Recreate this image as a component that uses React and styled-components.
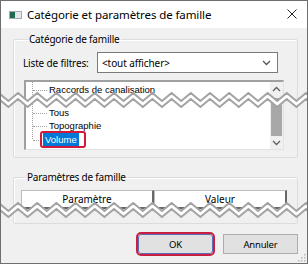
import React from 'react'
import styled, { createGlobalStyle } from 'styled-components'

const GlobalStyle = createGlobalStyle`
  html, body {
    margin: 0;
    padding: 0;
    background: #ffffff;
  }
  * {
    box-sizing: border-box;
  }
`

const Window = styled.div`
  position: relative;
  width: 308px;
  height: 264px;
  border: 1px solid #6e6e6e;
  background: #f0f0f0;
  font-family: 'Noto Sans', 'Open Sans', sans-serif;
  font-size: 10px;
  color: #000;
  display: flex;
  flex-direction: column;
  overflow: hidden;
`

const TitleBar = styled.div`
  height: 27px;
  background: #ffffff;
  display: flex;
  align-items: center;
  padding: 0 0 0 8px;
  flex-shrink: 0;
`

const AppIcon = styled.div`
  width: 13px;
  height: 8px;
  border: 1px solid #a4a9ad;
  background: #e4e6e8;
  display: flex;
  margin-right: 5px;

  &::before {
    content: '';
    width: 5px;
    height: 100%;
    background: #1f6a52;
  }
`

const Title = styled.div`
  flex: 1;
  font-size: 11.5px;
  letter-spacing: -0.1px;
  margin-top: -1px;
`

const CloseButton = styled.div`
  width: 30px;
  height: 27px;
  display: flex;
  align-items: center;
  justify-content: center;
  margin-top: -1px;
`

const Body = styled.div`
  flex: 1;
  display: flex;
  flex-direction: column;
  padding: 5px 9px 0 12px;
`

const GroupBox = styled.fieldset`
  margin: 0;
  padding: ${p => p.$pad};
  border: 1px solid #dcdcdc;
  border-radius: 2px;
  box-shadow: inset 1px 1px 0 #ffffff;
  height: ${p => p.$h}px;
  display: flex;
  flex-direction: column;
  margin-bottom: ${p => p.$mb || 0}px;
  min-width: 0;
`

const Legend = styled.legend`
  padding: 0 1px;
  margin-left: 5px;
  font-size: 10px;
  line-height: 12px;
  letter-spacing: -0.2px;
`

const FilterRow = styled.div`
  display: flex;
  align-items: center;
  height: 21px;
  margin-right: 6px;
`

const FilterLabel = styled.span`
  width: 74px;
  white-space: nowrap;
  font-size: 10px;
  letter-spacing: -0.15px;
`

const Combo = styled.div`
  flex: 1;
  height: 21px;
  background: #ffffff;
  border: 1px solid #7a7a7a;
  display: flex;
  align-items: center;
  justify-content: space-between;
  padding: 0 6px 0 4px;
  font-size: 10px;
  letter-spacing: -0.1px;
`

const ListBox = styled.div`
  margin: 7px 0 0 1px;
  height: 70px;
  background: #ffffff;
  border-top: 2px solid #a0a0a0;
  border-left: 2px solid #a0a0a0;
  border-right: 1px solid #e3e3e3;
  border-bottom: 1px solid #e3e3e3;
  display: flex;
`

const TreeArea = styled.div`
  flex: 1;
  position: relative;
  padding-top: 1px;
  font-family: 'Liberation Sans', Arial, sans-serif;
  font-size: 9.5px;
`

const TreeLine = styled.div`
  position: absolute;
  left: 6px;
  top: 0;
  height: 57px;
  border-left: 1px dotted #a0a0a0;
`

const TreeItem = styled.div`
  position: relative;
  height: 13.5px;
  line-height: 13px;
  padding-left: ${p => (p.$boxed ? 14 : 23)}px;
  margin-top: ${p => p.$gap || 0}px;
  display: flex;
  align-items: center;

  &::before {
    content: '';
    position: absolute;
    left: 7px;
    top: 7px;
    width: 14px;
    border-top: 1px dotted #a0a0a0;
  }
`

const Highlight = styled.span`
  position: relative;
  z-index: 1;
  display: inline-flex;
  align-items: center;
  height: 17px;
  padding: 0 5px 0 1px;
  border: 2px solid #d11a3a;
  border-radius: 3px;
  background: #ffffff;
`

const ItemText = styled.span`
  display: inline-block;
  padding: 0 2px;
  height: 13px;
  line-height: 13px;
  background: #0078d7;
  color: #ffffff;
`

const ScrollBar = styled.div`
  width: 13px;
  display: flex;
  flex-direction: column;
  align-items: center;
  background: #f0f0f0;
`

const ScrollArrow = styled.div`
  height: 13px;
  display: flex;
  align-items: center;
  justify-content: center;
`

const ScrollTrack = styled.div`
  flex: 1;
  display: flex;
  flex-direction: column;
  justify-content: flex-end;
`

const ScrollThumb = styled.div`
  width: 11px;
  height: 38px;
  background: #a8a8a8;
`

const Header = styled.div`
  display: flex;
  height: 19px;
  margin-top: 3px;
`

const HeaderCell = styled.div`
  flex: 1;
  display: flex;
  align-items: flex-start;
  justify-content: center;
  background: #ffffff;
  border: 1px solid #a0a0a0;
  border-left-color: #bdbdbd;
  border-top-color: #bdbdbd;
  border-right: 2px solid #696969;
  border-bottom: 2px solid #696969;
  font-size: 10px;
  line-height: 14px;
  padding-top: 1px;
`

const Footer = styled.div`
  display: flex;
  justify-content: flex-end;
  gap: 10px;
  margin-top: 10px;
`

const Button = styled.div`
  width: 75px;
  height: 20px;
  display: flex;
  align-items: center;
  justify-content: center;
  background: #e1e1e1;
  border: 1px solid ${p => (p.$focus ? '#5b6fb8' : '#adadad')};
  font-size: 9.5px;
  letter-spacing: -0.2px;
  outline: ${p => (p.$focus ? '2px solid #c8203e' : 'none')};
  border-radius: ${p => (p.$focus ? '3px' : '0')};
`

const Grip = styled.svg`
  position: absolute;
  right: 1px;
  bottom: 1px;
`

const Tear = styled.svg`
  position: absolute;
  left: -1px;
  top: ${p => p.$top}px;
`

const zig = (y0, amp, period, width, offset) => {
  const pts = []
  const half = period / 2
  let i = 0
  for (let x = offset - period; x <= width + period; x += half) {
    pts.push(`${x.toFixed(1)},${i % 2 === 0 ? y0 : y0 + amp}`)
    i += 1
  }
  return pts
}

function TearBand({ top }) {
  const upper = zig(1, 8, 19.2, 310, 18)
  const lower = zig(7, 8, 19.2, 310, 18)
  const fill = [...upper, ...lower.slice().reverse()].join(' ')
  return (
    <Tear $top={top} width="310" height="17" viewBox="0 0 310 17">
      <polygon points={fill} fill="#ffffff" />
      <polyline points={upper.join(' ')} fill="none" stroke="#a3a3a3" strokeWidth="2" />
      <polyline points={lower.join(' ')} fill="none" stroke="#a3a3a3" strokeWidth="2" />
    </Tear>
  )
}

const Chevron = ({ dir = 'down', color = '#555' }) => (
  <svg width="9" height="6" viewBox="0 0 9 6">
    <polyline
      points={dir === 'down' ? '1,1 4.5,4.5 8,1' : '1,5 4.5,1.5 8,5'}
      fill="none"
      stroke={color}
      strokeWidth="1.3"
    />
  </svg>
)

export default function App() {
  return (
    <>
      <GlobalStyle />
      <Window>
        <TitleBar>
          <AppIcon />
          <Title>Catégorie et paramètres de famille</Title>
          <CloseButton>
            <svg width="10" height="10" viewBox="0 0 10 10">
              <path d="M0.5 0.5 L9.5 9.5 M9.5 0.5 L0.5 9.5" stroke="#222" strokeWidth="1" />
            </svg>
          </CloseButton>
        </TitleBar>
        <Body>
          <GroupBox $h={125} $pad="7px 13px 0 9px" $mb={13}>
            <Legend>Catégorie de famille</Legend>
            <FilterRow>
              <FilterLabel>Liste de filtres:</FilterLabel>
              <Combo>
                <span>&lt;tout afficher&gt;</span>
                <Chevron />
              </Combo>
            </FilterRow>
            <ListBox>
              <TreeArea>
                <TreeLine />
                <TreeItem>Raccords de canalisation</TreeItem>
                <TreeItem $gap={9}>Tous</TreeItem>
                <TreeItem>Topographie</TreeItem>
                <TreeItem $boxed>
                  <Highlight>
                    <ItemText>Volume</ItemText>
                  </Highlight>
                </TreeItem>
              </TreeArea>
              <ScrollBar>
                <ScrollArrow>
                  <Chevron dir="up" color="#606060" />
                </ScrollArrow>
                <ScrollTrack>
                  <ScrollThumb />
                </ScrollTrack>
                <ScrollArrow>
                  <Chevron color="#606060" />
                </ScrollArrow>
              </ScrollBar>
            </ListBox>
          </GroupBox>
          <GroupBox $h={53} $pad="4px 10px 0 7px">
            <Legend>Paramètres de famille</Legend>
            <Header>
              <HeaderCell>Paramètre</HeaderCell>
              <HeaderCell>Valeur</HeaderCell>
            </Header>
          </GroupBox>
          <Footer>
            <Button $focus>OK</Button>
            <Button>Annuler</Button>
          </Footer>
        </Body>
        <TearBand top={91} />
        <TearBand top={201} />
        <Grip width="8" height="8" viewBox="0 0 8 8">
          {[[6, 0], [6, 3], [3, 3], [6, 6], [3, 6], [0, 6]].map(([x, y]) => (
            <rect key={`${x}-${y}`} x={x} y={y} width="1.5" height="1.5" fill="#b8b8b8" />
          ))}
        </Grip>
      </Window>
    </>
  )
}
